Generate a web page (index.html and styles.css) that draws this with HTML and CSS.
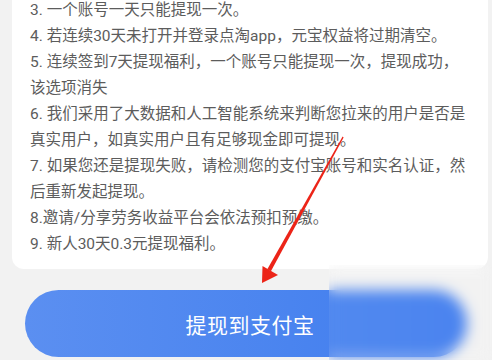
FILE: index.html
```html
<!DOCTYPE html>
<html lang="zh-CN">
<head>
<meta charset="utf-8">
<title>提现规则</title>
<link rel="stylesheet" href="styles.css">
</head>
<body>
<div class="page">
  <div class="card">
    <p class="rule">3. 一个账号一天只能提现一次。</p>
    <p class="rule">4. 若连续30天未打开并登录点淘app，元宝权益将过期清空。</p>
    <p class="rule">5. 连续签到7天提现福利，一个账号只能提现一次，提现成功，<br>该选项消失</p>
    <p class="rule">6. 我们采用了大数据和人工智能系统来判断您拉来的用户是否是<br>真实用户，如真实用户且有足够现金即可提现。</p>
    <p class="rule">7. 如果您还是提现失败，请检测您的支付宝账号和实名认证，然<br>后重新发起提现。</p>
    <p class="rule">8.邀请/分享劳务收益平台会依法预扣预缴。</p>
    <p class="rule">9. 新人30天0.3元提现福利。</p>
  </div>
  <div class="action">
    <button class="withdraw">提现到支付宝</button>
  </div>
  <svg class="arrow" width="492" height="360" viewBox="0 0 492 360" aria-hidden="true">
    <polygon points="342.6,136.6 343.6,137.4 270.9,271.2 267.3,269.2" fill="#ec2418"/>
    <polygon points="262,283 262.5,266 278,275" fill="#ec2418"/>
  </svg>
  <div class="blur"></div>
</div>
</body>
</html>
```
FILE: styles.css
```css
html, body {
  margin: 0;
  padding: 0;
  background: #f2f2f2;
}
.page {
  position: relative;
  width: 492px;
  height: 360px;
  overflow: hidden;
  font-family: Roboto, "Noto Sans CJK SC", sans-serif;
}
.card {
  margin: -3px 4px 0 12px;
  padding: 0 0 12px 18px;
  background: #ffffff;
  border-radius: 0 0 12px 12px;
}
.rule {
  margin: 0;
  font-size: 15.5px;
  line-height: 26px;
  color: #5c5c5c;
  white-space: nowrap;
}
.action {
  display: flex;
  justify-content: center;
  padding-top: 21px;
}
.withdraw {
  width: 442px;
  height: 67px;
  border: none;
  border-radius: 34px;
  background: linear-gradient(90deg, #5b8ff1 0%, #4a84ef 60%, #3f7cef 100%);
  color: #ffffff;
  font-family: Roboto, "Noto Sans CJK SC", sans-serif;
  font-size: 21px;
  letter-spacing: 0.5px;
  padding: 0 0 0 8px;
}
.arrow {
  position: absolute;
  left: 0;
  top: 0;
}
.blur {
  position: absolute;
  left: 329px;
  top: 265px;
  width: 163px;
  height: 95px;
  backdrop-filter: blur(7px);
  background: rgba(255, 255, 255, 0.06);
}
```
